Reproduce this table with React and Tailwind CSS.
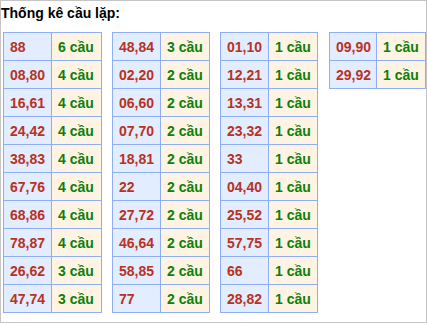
import React from 'react'

const TABLES = [
  {
    w: ['w-[48px]', 'w-[50px]'],
    rows: [
      ['88', '6 cầu'],
      ['08,80', '4 cầu'],
      ['16,61', '4 cầu'],
      ['24,42', '4 cầu'],
      ['38,83', '4 cầu'],
      ['67,76', '4 cầu'],
      ['68,86', '4 cầu'],
      ['78,87', '4 cầu'],
      ['26,62', '3 cầu'],
      ['47,74', '3 cầu'],
    ],
  },
  {
    w: ['w-[48px]', 'w-[49px]'],
    rows: [
      ['48,84', '3 cầu'],
      ['02,20', '2 cầu'],
      ['06,60', '2 cầu'],
      ['07,70', '2 cầu'],
      ['18,81', '2 cầu'],
      ['22', '2 cầu'],
      ['27,72', '2 cầu'],
      ['46,64', '2 cầu'],
      ['58,85', '2 cầu'],
      ['77', '2 cầu'],
    ],
  },
  {
    w: ['w-[48px]', 'w-[49px]'],
    rows: [
      ['01,10', '1 cầu'],
      ['12,21', '1 cầu'],
      ['13,31', '1 cầu'],
      ['23,32', '1 cầu'],
      ['33', '1 cầu'],
      ['04,40', '1 cầu'],
      ['25,52', '1 cầu'],
      ['57,75', '1 cầu'],
      ['66', '1 cầu'],
      ['28,82', '1 cầu'],
    ],
  },
  {
    w: ['w-[47px]', 'w-[49px]'],
    rows: [
      ['09,90', '1 cầu'],
      ['29,92', '1 cầu'],
    ],
  },
]

// khoảng cách giữa các bảng
const GAPS = ['ml-[2px]', 'ml-[10px]', 'ml-[10px]', 'ml-[11px]']

function CauTable({ table, className }) {
  return (
    <div className={`flex-none border-l border-t border-[#8eb0f2] ${className}`}>
      {table.rows.map(([so, cau], i) => (
        <div key={i} className="flex">
          <div
            className={`${table.w[0]} h-[28px] flex items-center pl-[6px] bg-[#e2edff] border-r border-b border-[#8eb0f2] text-[#b8321f]`}
          >
            {so}
          </div>
          <div
            className={`${table.w[1]} h-[28px] flex items-center pl-[6px] bg-[#fff4e3] border-r border-b border-[#8eb0f2] text-[#0b800b]`}
          >
            {cau}
          </div>
        </div>
      ))}
    </div>
  )
}

export default function App() {
  return (
    <div className="w-[427px] h-[323px] border border-[#c4c4c4] bg-white font-['Liberation_Sans',Arial,sans-serif] font-bold text-[14px] leading-[16px]">
      <div className="pt-[4px] text-black">Thống kê cầu lặp:</div>
      <div className="flex items-start mt-[11px]">
        {TABLES.map((t, i) => (
          <CauTable key={i} table={t} className={GAPS[i]} />
        ))}
      </div>
    </div>
  )
}
